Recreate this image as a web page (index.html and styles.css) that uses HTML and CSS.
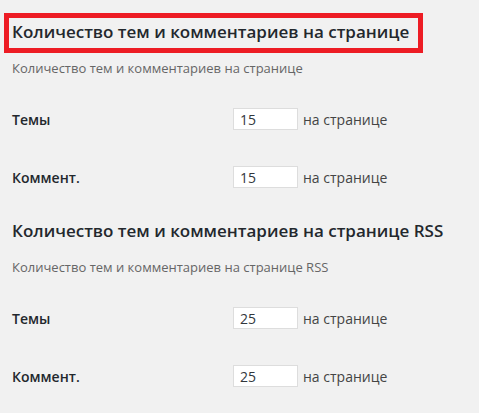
FILE: index.html
```html
<!DOCTYPE html>
<html lang="ru">
<head>
<meta charset="utf-8">
<title>Настройки</title>
<link rel="stylesheet" href="styles.css">
</head>
<body>
<div class="wrap">
  <section class="section first">
    <h2 class="title marked">Количество тем и комментариев на странице</h2>
    <p class="description">Количество тем и комментариев на странице</p>
    <div class="row">
      <label class="label">Темы</label>
      <input class="num" type="text" value="15">
      <span class="suffix">на странице</span>
    </div>
    <div class="row">
      <label class="label">Коммент.</label>
      <input class="num" type="text" value="15">
      <span class="suffix">на странице</span>
    </div>
  </section>
  <section class="section">
    <h2 class="title">Количество тем и комментариев на странице RSS</h2>
    <p class="description">Количество тем и комментариев на странице RSS</p>
    <div class="row">
      <label class="label">Темы</label>
      <input class="num" type="text" value="25">
      <span class="suffix">на странице</span>
    </div>
    <div class="row">
      <label class="label">Коммент.</label>
      <input class="num" type="text" value="25">
      <span class="suffix">на странице</span>
    </div>
  </section>
</div>
</body>
</html>
```
FILE: styles.css
```css
html, body {
  margin: 0;
  padding: 0;
  background: #f1f1f1;
}
body {
  font-family: "Open Sans", "Noto Sans", sans-serif;
  color: #444;
  font-size: 13px;
}
.wrap {
  padding: 13px 0 0 12px;
}
.section.first {
  margin-bottom: 24px;
}
.title {
  margin: 0 0 0 -8px;
  padding: 0 0 3px 3px;
  border: 5px solid transparent;
  font-size: 17px;
  font-weight: 600;
  line-height: 27px;
  color: #23282d;
  white-space: nowrap;
}
.title.marked {
  width: 406px;
  box-sizing: content-box;
  border-color: #ed1c24;
}
.description {
  margin: 6px 0 0;
  font-size: 13px;
  line-height: 18px;
  color: #666;
}
.row {
  display: flex;
  align-items: center;
  height: 22px;
  margin-top: 36px;
}
.description + .row {
  margin-top: 31px;
}
.label {
  width: 221px;
  flex: none;
  font-size: 14px;
  font-weight: 600;
  line-height: 19px;
  color: #23282d;
}
.num {
  box-sizing: border-box;
  width: 65px;
  height: 22px;
  margin: 0;
  padding: 0 6px;
  border: 1px solid #ddd;
  background: #fff;
  font-family: "Open Sans", "Noto Sans", sans-serif;
  font-size: 14px;
  color: #32373c;
  outline: none;
}
.suffix {
  margin-left: 5px;
  font-size: 14px;
  line-height: 19px;
  color: #444;
}
```
